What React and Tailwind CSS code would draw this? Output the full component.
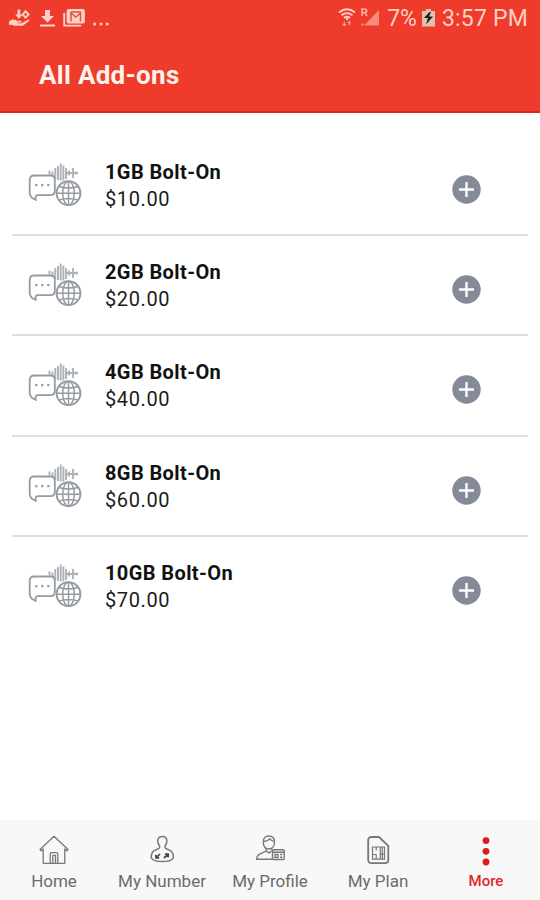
const addOns = [
  { name: "1GB Bolt-On", price: "$10.00" },
  { name: "2GB Bolt-On", price: "$20.00" },
  { name: "4GB Bolt-On", price: "$40.00" },
  { name: "8GB Bolt-On", price: "$60.00" },
  { name: "10GB Bolt-On", price: "$70.00" },
];

const tabs = [
  { label: "Home", Icon: HomeIcon },
  { label: "My Number", Icon: NumberIcon },
  { label: "My Profile", Icon: ProfileIcon },
  { label: "My Plan", Icon: PlanIcon },
  { label: "More", Icon: MoreIcon, active: true },
];

function HomeIcon() {
  return (
    <svg width="32" height="32" viewBox="0 0 32 32" fill="none" stroke="#777" strokeWidth="1.3" strokeLinejoin="round">
      <path d="M2 15.500 16 2.200 30 15.500l-1.200 1.200-2-1.800V29.300H5.200V14.900l-2 1.800Z" />
      <path d="M12.200 29V20q0-1.300 1.300-1.300h5q1.300 0 1.300 1.300v9M14.800 29v-7.700h2.700V29" />
    </svg>
  );
}

function NumberIcon() {
  return (
    <svg width="32" height="32" viewBox="0 0 32 32" fill="none" stroke="#777" strokeWidth="1.5" strokeLinejoin="round">
      <path d="M13.600 13.500v-1.600C11.900 10.400 11.600 8.500 11.700 6.500c.2-2.600 2.100-4 4.600-4s4.400 1.400 4.600 4c.1 2-.2 3.900-1.900 5.400v1.600c.5 1.700 3.200 1.800 5.400 3.200 2.400 1.600 3 4.300 3 7-1.200 2.800-4 3.800-11.100 3.800S6.400 26.500 5.200 23.700c0-2.700.6-5.400 3-7 2.200-1.400 4.900-1.500 5.400-3.200Z" />
      <path d="m14 20-4 4m0-3.200V24h3.300M18 24l4.300-3.800m-3.500-.2h3.500v3.300" stroke="#444" strokeWidth="1.700" />
    </svg>
  );
}

function ProfileIcon() {
  return (
    <svg width="32" height="32" viewBox="0 0 32 32" fill="none" stroke="#777" strokeWidth="1.4" strokeLinejoin="round">
      <path d="M9.300 7.800c0-3.900 2.200-5.800 5.500-5.800s5.700 2 5.700 5.800c0 3.900-1.900 7.200-5.700 7.200s-5.500-3.300-5.500-7.200Z" />
      <path d="M9.500 7.500c3.600 0 5-1.500 6.500-2.700 1 1.500 2.400 2.500 4.400 2.800" />
      <path d="M12.200 14v3C9 19.300 2.700 19 2.500 25.300h16M17.700 14v2.300M12.200 17l2.800 1.800 2.500-1.700" />
      <rect x="18.500" y="15.700" width="11.700" height="9.800" rx="1" />
      <path d="M18.500 18.300h11.700M21 20.500h3v3h-3ZM26 20.500h2.300M26 23.200h2.300" />
    </svg>
  );
}

function PlanIcon() {
  return (
    <svg width="32" height="32" viewBox="0 0 32 32" fill="none" stroke="#777" strokeWidth="1.2" strokeLinejoin="round">
      <path d="M9.500 3h7.500l9.300 8.800v14c0 2.200-1.200 3.400-3.400 3.400H9.500c-2.200 0-3.300-1.200-3.300-3.400V6.300C6.200 4.100 7.300 3 9.500 3Z" strokeWidth="1.800" />
      <path d="M10.500 13h12v12.200h-12ZM14.200 13v3.500M18.300 13v7.200h4.200M18.300 20v5M20.300 13v12M10.500 20.500h3.700v4.700" />
    </svg>
  );
}

function MoreIcon() {
  return (
    <svg width="32" height="32" viewBox="0 0 32 32" fill="#e0181e">
      <circle cx="16" cy="6.600" r="3.400" />
      <circle cx="16" cy="17.300" r="3.400" />
      <circle cx="16" cy="28" r="3.400" />
    </svg>
  );
}

function BundleIcon() {
  return (
    <svg width="56" height="48" viewBox="0 0 56 48" fill="none" stroke="#969ba1">
      <path d="M22.500 9.500v4M25.500 10.500v5M28.300 7v11M31 5v14M33.700 2.500v17M36.400 4.500v15M39.100 7v11M42 9.500v5M46 7v10M49.500 10.500v3M51 12H38" strokeWidth="1.900" stroke="#adb1b8" />
      <path d="M7 14.500h16.500q4.300 0 4.300 4.300v11q0 4.300-4.300 4.300H11q-2.200 0-2.500 2.200l.3 2.700Q2.700 36.500 2.700 32V18.800q0-4.300 4.300-4.300Z" fill="#fff" strokeWidth="1.800" strokeLinejoin="round" />
      <path d="M8.200 24.200h2.200m3.800 0h2.200m3.800 0h2.200" strokeWidth="2.200" />
      <circle cx="41.500" cy="32.200" r="11.900" fill="#fff" strokeWidth="1.900" />
      <ellipse cx="41.500" cy="32.200" rx="5.800" ry="11.900" strokeWidth="1.500" />
      <path d="M41.500 20.300v23.800M29.600 32.200h23.800M32 25.500q9.500 3 19 0M32 39q9.500-3 19 0" strokeWidth="1.500" />
    </svg>
  );
}

function PlusIcon() {
  return (
    <svg width="29" height="29" viewBox="0 0 29 29">
      <circle cx="14.500" cy="14.500" r="14.200" fill="#858a98" />
      <path d="M14.500 7v15M7 14.500h15" stroke="#fff" strokeWidth="2.300" />
    </svg>
  );
}

function StatusBar() {
  return (
    <div className="flex h-9 items-center justify-between pr-3 pl-2 text-[#ffd0c4]">
      <div className="flex items-center">
        <svg width="24" height="20" viewBox="0 0 24 20" fill="currentColor">
          <path d="M1 13.500c3-2.700 5.500-2.500 7.500-.8h4.200c1 0 1 1.600 0 1.800H9.500v.7h4L20 11.700c1.200-.5 2 .5 1.200 1.400l-6.500 4.700H6l-2.500-1L1 17Z" />
          <path d="M9.500 1.500h2.800v5h2.300L10.900 11 7.200 6.500h2.300ZM17.500 1.800l4.500 4.600-4.500 4.600-4-4.600Z" />
          <path d="m17.500 4.700 1.700 1.700-1.700 1.800-1.500-1.800Z" fill="#ef3b2b" />
        </svg>
        <svg className="ml-2" width="15" height="18" viewBox="0 0 15 18" fill="currentColor">
          <path d="M5 1h5v6h4l-6.500 6.500L1 7h4ZM0 15.500h15v2H0Z" />
        </svg>
        <svg className="ml-2" width="22" height="18" viewBox="0 0 22 18" fill="none" stroke="currentColor">
          <path d="M1.200 4v12.600h17" strokeWidth="1.900" />
          <rect x="4.500" y="1" width="16.500" height="12.500" rx="1" strokeWidth="1.800" fill="#ffd0c4" />
          <path d="M8 12.500V4l4.800 4 4.700-4v8.500M8 3h9.500" stroke="#df5049" strokeWidth="1.500" />
        </svg>
        <svg className="mt-3 ml-2" width="16" height="4" viewBox="0 0 16 4" fill="currentColor">
          <circle cx="1.600" cy="2" r="1.500" />
          <circle cx="8" cy="2" r="1.500" />
          <circle cx="14.200" cy="2" r="1.500" />
        </svg>
      </div>
      <div className="flex items-center">
        <svg width="18" height="20" viewBox="0 0 18 20" fill="none" stroke="currentColor" strokeWidth="1.800">
          <path d="M1 4.500q8-6.500 16 0M3.500 7.300q5.500-4.400 11 0M6 10q3-2.400 6 0" />
          <path d="M9 9v3" />
          <path d="M6.300 13.500v4m-1.500-1.500 1.500 1.700 1.500-1.700M11.300 17.500v-4m-1.500 1.500 1.500-1.700 1.500 1.700" strokeWidth="1.200" opacity=".65" />
        </svg>
        <svg className="ml-1" width="20" height="20" viewBox="0 0 20 20" fill="none" stroke="currentColor">
          <path d="M19 2v15.500H4Z" fill="#fa8b7b" stroke="none" />
          <path d="M2 8V1h2.600q2 0 2 1.800t-2 1.800H2m2.600 0L7 8" strokeWidth="1.700" opacity=".75" />
          <path d="M1.500 16.500h2" strokeWidth="2" opacity=".65" />
        </svg>
        <span className="mt-[3px] ml-[7px] text-[23px]">7%</span>
        <svg className="ml-[5px]" width="13" height="19" viewBox="0 0 13 19">
          <path d="M4 0h5v2h4v15.500H0V2h4Z" fill="#e3bfae" />
          <path d="M7.500 3 2 9h4l-2 6.500 7-8H7l2-4.500Z" fill="#211a1a" />
        </svg>
        <span className="mt-[3px] ml-[7px] text-[23px] tracking-[0.2px]">3:57 PM</span>
      </div>
    </div>
  );
}

export default function App() {
  return (
    <div className="flex h-[900px] w-[540px] flex-col bg-white font-['Roboto',sans-serif]">
      <header className="h-[113px] border-b-2 border-[#d9291e] bg-[#ef3b2b]">
        <StatusBar />
        <h1 className="mt-[23px] ml-[39px] text-[26px] leading-8 font-bold tracking-[0.3px] text-[#fff4ee]">
          All Add-ons
        </h1>
      </header>

      <main className="flex-1 px-3 pt-[22.800px]">
        <ul>
          {addOns.map((item) => (
            <li
              key={item.name}
              className="flex h-[100.300px] items-start border-b-2 border-[#dedede] pt-[23px] pr-[47px] pl-[15px] last:border-b-0"
            >
              <div className="mt-[2px]">
                <BundleIcon />
              </div>
              <div className="ml-[22px] flex-1 text-[20px] leading-[27px] text-[#1b1b1b]">
                <div className="font-bold tracking-[0.4px] text-[#111]">{item.name}</div>
                <div className="tracking-[0.6px]">{item.price}</div>
              </div>
              <button className="mt-4" aria-label={`Add ${item.name}`}>
                <PlusIcon />
              </button>
            </li>
          ))}
        </ul>
      </main>

      <nav className="grid h-20 grid-cols-5 bg-[#f8f8f8]">
        {tabs.map(({ label, Icon, active }) => (
          <a key={label} className="flex flex-col items-center pt-[14px]">
            <Icon />
            <span
              className={
                active
                  ? "mt-[5px] text-[15px] leading-5 font-medium text-[#e0282c]"
                  : "mt-[5px] text-[17px] leading-5 text-[#6b6b6b]"
              }
            >
              {label}
            </span>
          </a>
        ))}
      </nav>
    </div>
  );
}
